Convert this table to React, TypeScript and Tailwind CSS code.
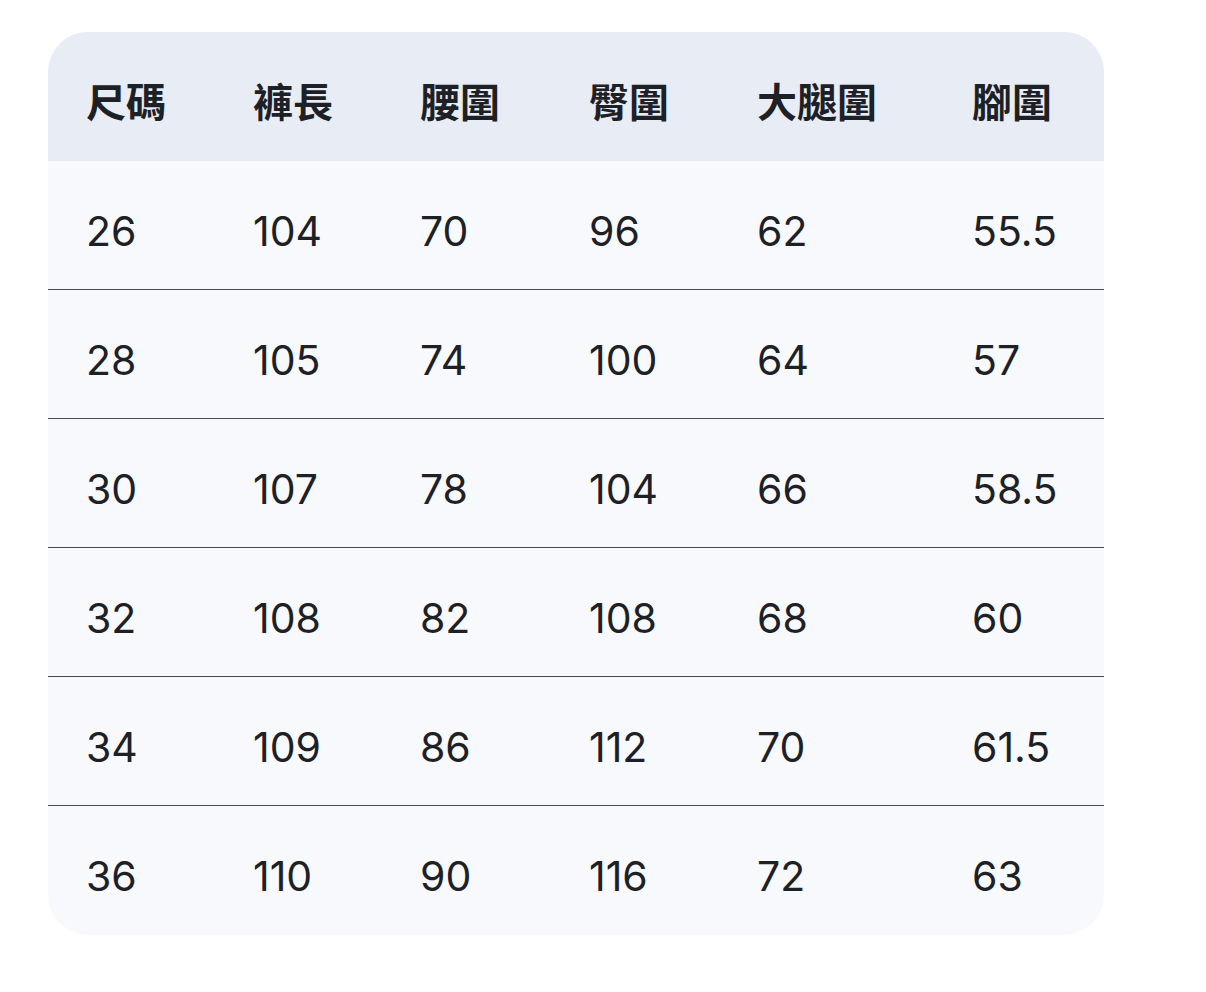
import React from "react";

const headers = ["尺碼", "褲長", "腰圍", "臀圍", "大腿圍", "腳圍"];

const rows = [
  ["26", "104", "70", "96", "62", "55.5"],
  ["28", "105", "74", "100", "64", "57"],
  ["30", "107", "78", "104", "66", "58.5"],
  ["32", "108", "82", "108", "68", "60"],
  ["34", "109", "86", "112", "70", "61.5"],
  ["36", "110", "90", "116", "72", "63"],
];

const cols = "grid grid-cols-[167px_167px_169px_168px_215px_1fr]";

function App() {
  return (
    <div className="w-[1206px] h-[992px] bg-white pt-8 pl-12 font-['Inter','Noto_Sans_CJK_TC',sans-serif] text-[#1d2125]">
      {/* SIZE TABLE */}
      <div className="w-[1056px] rounded-[40px] overflow-hidden bg-[#f7f9fd]">
        <div className={`${cols} h-[129px] items-center bg-[#e7ecf5]`}>
          {headers.map((h) => (
            <div key={h} className="pl-[38px] pt-[12px] text-[40px] font-semibold leading-none">
              {h}
            </div>
          ))}
        </div>
        {rows.map((r, i) => (
          <div
            key={r[0]}
            className={`${cols} h-[129px] items-center ${i < rows.length - 1 ? "border-b border-[#4a4a4a]" : ""}`}
          >
            {r.map((c, j) => (
              <div key={j} className="pl-[38px] pt-[12px] text-[41px] leading-none">
                {c}
              </div>
            ))}
          </div>
        ))}
      </div>
    </div>
  );
}

export default App;
